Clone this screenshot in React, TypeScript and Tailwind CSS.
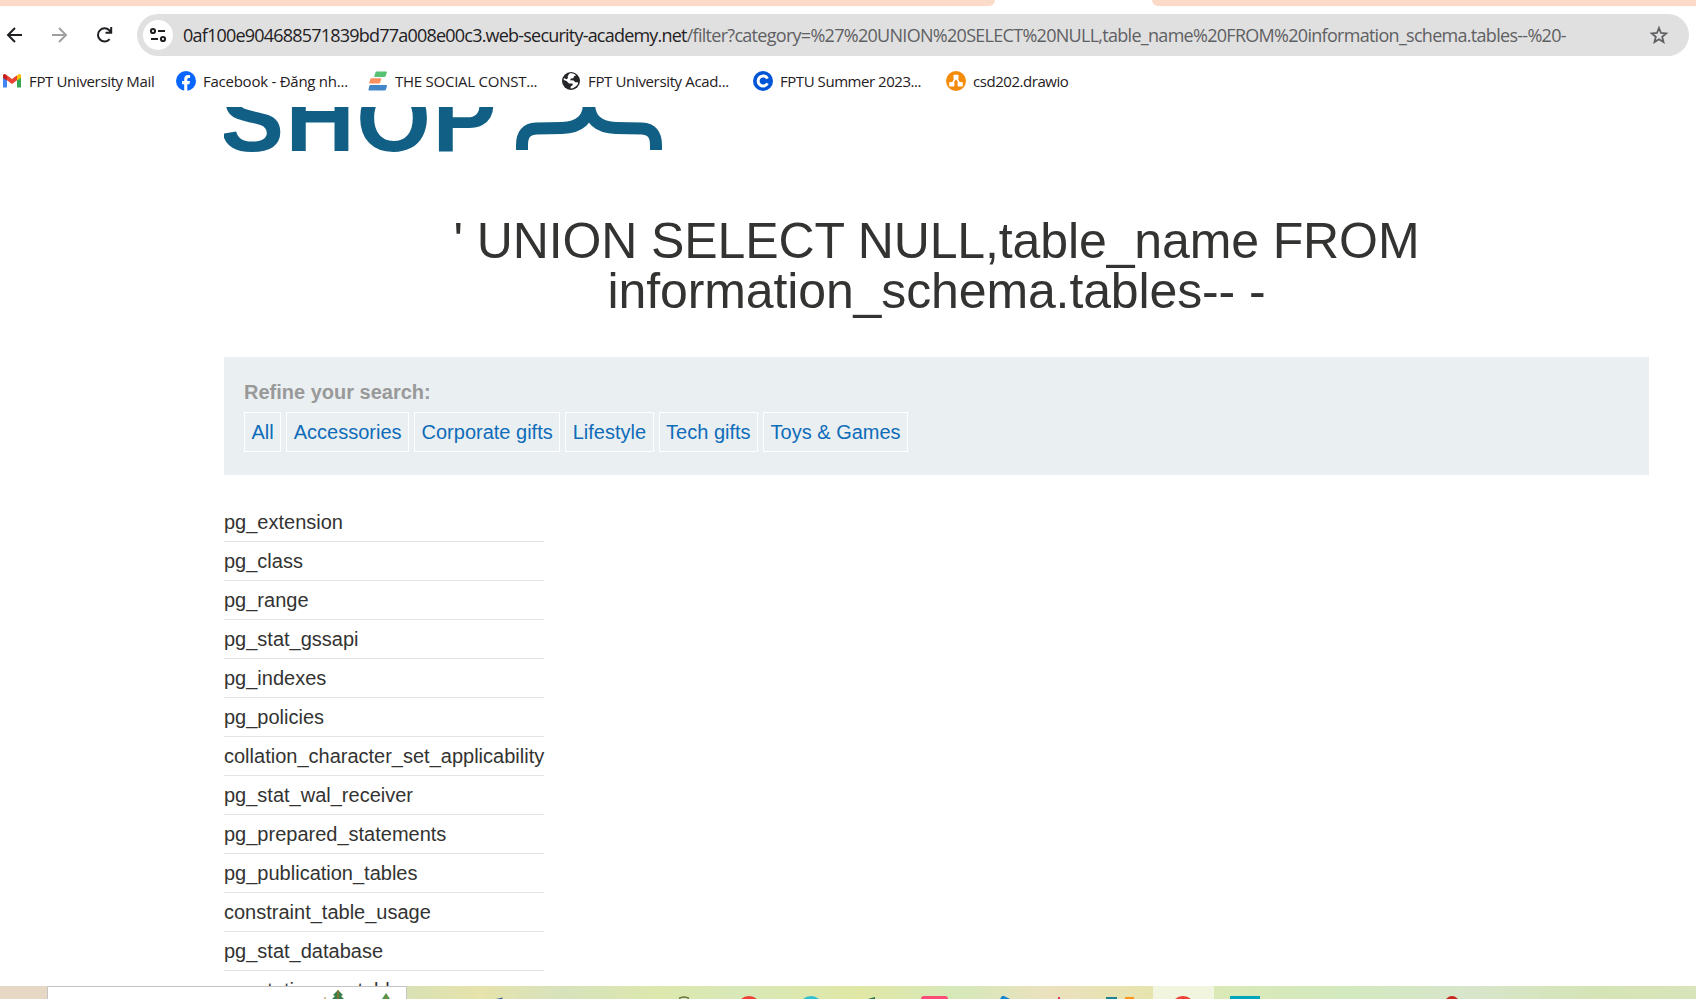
const URL_HOST = '0af100e904688571839bd77a008e00c3.web-security-academy.net';
const URL_PATH = '/filter?category=%27%20UNION%20SELECT%20NULL,table_name%20FROM%20information_schema.tables--%20-';

const categories = ['All', 'Accessories', 'Corporate gifts', 'Lifestyle', 'Tech gifts', 'Toys & Games'];
const rows = [
  'pg_extension', 'pg_class', 'pg_range', 'pg_stat_gssapi', 'pg_indexes', 'pg_policies',
  'collation_character_set_applicability', 'pg_stat_wal_receiver', 'pg_prepared_statements',
  'pg_publication_tables', 'constraint_table_usage', 'pg_stat_database', 'pg_statio_sys_tables',
];

function GmailIcon() {
  return (
    <svg width="20" height="20" viewBox="0 0 20 20">
      <path d="M1 5v11.5h4V8z" fill="#4285f4" />
      <path d="M15 8v8.500h4V5z" fill="#34a853" />
      <path d="M15 4.500v5L19 7V4.500C19 2.800 17 2.500 16 3.500z" fill="#fbbc04" />
      <path d="M5 4.500v5L1 7V4.500C1 2.800 3 2.500 4 3.500z" fill="#c5221f" />
      <path d="M5 4.300l5 3.700 5-3.700v5L10 13 5 9.300z" fill="#ea4335" />
    </svg>
  );
}
function FacebookIcon() {
  return (
    <svg width="20" height="20" viewBox="0 0 20 20">
      <circle cx="10" cy="10" r="10" fill="#0866ff" />
      <path d="M8.200 20v-6.800H6V10h2.200V8.600C8.200 5.300 9.700 4 12.200 4c.6 0 1.400.1 1.900.2v2.900h-1.200c-1.300 0-1.600.6-1.600 1.700V10H14l-.6 3.200h-2.100V20z" fill="#fff" />
    </svg>
  );
}
function StackIcon() {
  return (
    <svg width="20" height="20" viewBox="0 0 20 20">
      <path d="M8.500 .5h9.500q1.200 0 .8 1.200l-1 3q-.4 1.300-1.800 1.300H7q-1 0-.7-1l1-3Q7.500 .5 8.500 .5z" fill="#57c274" />
      <path d="M3.500 7.200h9q1 0 .7 1l-.9 3q-.3 1.200-1.600 1.200H2q-1 0-.7-1l.9-3q.3-1.200 1.300-1.200z" fill="#fb9160" />
      <path d="M2.500 14h15.800q1 0 .7 1l-.9 3q-.3 1.500-1.700 1.500H1.200q-1 0-.7-1l.7-3.200Q1.500 14 2.500 14z" fill="#4487c8" />
    </svg>
  );
}
function GlobeIcon() {
  return (
    <svg width="20" height="20" viewBox="0 0 20 20">
      <circle cx="10" cy="10" r="9" fill="#242528" />
      <path d="M8.500 2.500c3-.6 5 .4 6.500 2l-2 .8-.6 2-2.600.2-.6 1.800 3.500.3 1.500 1.700h2.600l.3 1.500-2 2.500-3.300 1.900-2.300.3.200-2 2-1.200-.2-1.700-3.500-.2-2.500-2.300L2.700 9l.2-2 2.700 1.200L7 7l-.4-1.800z" fill="#fff" />
    </svg>
  );
}
function CIcon() {
  return (
    <svg width="20" height="20" viewBox="0 0 20 20">
      <circle cx="10" cy="10" r="10" fill="#0056d6" />
      <path d="M14.500 7.600A5 5 0 1 0 14.500 12.400" fill="none" stroke="#fff" strokeWidth="3" />
    </svg>
  );
}
function DrawioIcon() {
  return (
    <svg width="20" height="20" viewBox="0 0 20 20">
      <circle cx="10" cy="10" r="10" fill="#f58b0b" />
      <path d="M10 6.500L6 13M10 6.500l4 6.500" stroke="#fff" strokeWidth="1.500" />
      <rect x="7.500" y="3.800" width="5" height="4.700" rx=".8" fill="#fff" />
      <rect x="3.200" y="11" width="5.200" height="4.500" rx=".8" fill="#fff" />
      <rect x="11.600" y="11" width="5.200" height="4.500" rx=".8" fill="#fff" />
    </svg>
  );
}

const bookmarks = [
  { icon: <GmailIcon />, label: 'FPT University Mail', box: 'w-[174px] tracking-[-0.35px]' },
  { icon: <FacebookIcon />, label: 'Facebook - Đăng nh...', box: 'w-[192px] tracking-[-0.25px]' },
  { icon: <StackIcon />, label: 'THE SOCIAL CONST...', box: 'w-[193px] tracking-[-0.25px]' },
  { icon: <GlobeIcon />, label: 'FPT University Acad...', box: 'w-[192px] tracking-[-0.35px]' },
  { icon: <CIcon />, label: 'FPTU Summer 2023...', box: 'w-[193px] tracking-[-0.45px]' },
  { icon: <DrawioIcon />, label: 'csd202.drawio', box: 'w-[160px] tracking-[-0.45px]' },
];

function Toolbar() {
  return (
    <div className="mt-2 flex h-[42px] shrink-0 items-center pr-[7px]">
      <svg className="shrink-0" width="137" height="42" viewBox="0 0 137 42" fill="none" strokeWidth="2">
        <path d="M22 21H8.500M15 14l-7 7 7 7" stroke="#1f2023" />
        <path d="M52 21h13.500M59 14l7 7-7 7" stroke="#a0a0a0" />
        <path d="M109.600 25.200A6.600 6.600 0 1 1 109.300 16.300L111 18.300M111.200 13v5.700h-5.700" stroke="#1f2023" />
      </svg>
      <div className="flex h-[42px] flex-1 items-center rounded-full bg-[#e0e0e0] pl-[6px] pr-5">
        <div className="flex size-[30px] items-center justify-center rounded-full bg-white">
          <svg width="18" height="18" viewBox="0 0 18 18" fill="none" stroke="#1f2023" strokeWidth="2">
            <circle cx="4" cy="5" r="2.100" /><path d="M9 5h7M2 13h7" /><circle cx="14" cy="13" r="2.100" />
          </svg>
        </div>
        <div className="ml-[10px] flex-1 whitespace-nowrap font-['Open_Sans'] text-[18px] leading-[42px] text-[#5f6063]">
          <span className="tracking-[-0.79px] text-[#1f2023]">{URL_HOST}</span>
          <span className="tracking-[-0.71px]">{URL_PATH}</span>
        </div>
        <svg width="20" height="20" viewBox="0 0 20 20" fill="none" stroke="#5f6063" strokeWidth="1.800">
          <path d="M10 3l2 5 5.200.4-4 3.400 1.300 5.200L10 14.200 5.500 17l1.300-5.200-4-3.400L8 8z" />
        </svg>
      </div>
    </div>
  );
}

function Logo() {
  return (
    <div className="relative h-[46px] overflow-hidden">
      <span className="absolute -left-1 -top-[37px] text-[96px] leading-[96px] font-bold tracking-[1.5px] text-[#115f84]">SHOP</span>
      <svg className="absolute left-[292px] top-0" width="146" height="43" viewBox="0 0 146 43">
        <path d="M6 43V38Q6 22 20 21.500L46 21Q73 20 73 -4Q73 20 100 21L126 21.500Q140 22 140 38V43" fill="none" stroke="#115f84" strokeWidth="12" />
      </svg>
    </div>
  );
}

function Taskbar() {
  return (
    <div className="flex h-[13px] shrink-0 bg-[linear-gradient(90deg,#e6d8c4_0px,#e6d8c4_48px,#dae1b4_410px,#e6e3ab_480px,#d7e2bc_560px,#dce8ad_660px,#d8e8b8_740px,#e1e8a6_860px,#d6e8ba_960px,#ebe1be_1050px,#e6e4ae_1150px,#dae9b7_1220px,#d3e9bf_1350px,#d8e5cb_1470px,#d5e4b5_1600px,#d8e4ba_1696px)]">
      <svg width="1696" height="13" viewBox="0 0 1696 13">
        <path d="M47.500 13V.5h359V13" fill="#fff" stroke="#c4c4c4" />
        <path d="M332 13l3-3-2-1 3-3 2-2 2 2 3 3-2 1 3 3z" fill="#367f4b" />
        <path d="M338 4v9" stroke="#ad6b23" strokeWidth="1.200" />
        <path d="M382 13l4-6 4 6z" fill="#4c994a" />
        <path d="M325 11v2M386 9v4" stroke="#a77b2b" />
        <path d="M496 13l7-1.500-1 1.500z" fill="#2b579a" />
        <path d="M679 12.500q5-3 10 0" stroke="#65703e" strokeWidth="1.500" fill="none" />
        <circle cx="749" cy="22" r="12" fill="#ee4035" />
        <circle cx="811" cy="22" r="12" fill="#32bfd5" />
        <path d="M868 13l7-2v2z" fill="#277348" />
        <rect x="921" y="10" width="27" height="12" rx="3" fill="#fb4c78" />
        <path d="M1000 13l2-3h2l6 3z" fill="#1684cd" />
        <rect x="1058" y="11" width="2" height="2" fill="#d73662" />
        <rect x="1106" y="11" width="11" height="2" fill="#218194" />
        <rect x="1125" y="11" width="9" height="2" fill="#fb9516" />
        <rect x="1153" y="0" width="61" height="13" fill="#f1f5e0" />
        <circle cx="1183" cy="22" r="12" fill="#ee4035" />
        <rect x="1230" y="10" width="30" height="3" fill="#00a5bc" />
        <circle cx="1452" cy="17" r="7" fill="#c6271d" />
      </svg>
    </div>
  );
}

export default function App() {
  return (
    <div className="flex h-[999px] w-[1696px] flex-col overflow-hidden bg-white">
      <div className="flex h-[6px] shrink-0 justify-between">
        <div className="w-[995px] rounded-br-[10px] bg-[#fcdac8]" />
        <div className="w-[544px] rounded-bl-[10px] bg-[#fcdac8]" />
      </div>
      <Toolbar />
      <div className="flex h-[51px] shrink-0 items-center pb-[1px] pl-[2px]">
        {bookmarks.map((b) => (
          <div key={b.label} className={'flex shrink-0 items-center gap-[7px] ' + b.box}>
            {b.icon}
            <span className="whitespace-nowrap font-['Open_Sans'] text-[15px] text-[#1f2023]">{b.label}</span>
          </div>
        ))}
      </div>
      <main className="h-[879px] overflow-hidden pl-[224px] pr-[47px] font-['Liberation_Sans'] text-[20px] text-[#333332]">
        <Logo />
        <h1 className="mt-[63px] text-center text-[50px] leading-[50px] tracking-[-0.12px]">
          ' UNION SELECT NULL,table_name FROM<br />information_schema.tables-- -
        </h1>
        <section className="mt-[41px] h-[118px] bg-[#eaeff2] pl-5 pt-[20px]">
          <p className="font-bold leading-[30px] text-[#999]">Refine your search:</p>
          <div className="mt-[5px] flex gap-[5px] text-[#0e6cb9]">
            {categories.map((c) => (
              <a key={c} className="h-10 whitespace-nowrap border border-white px-[6.5px] leading-[38px]">{c}</a>
            ))}
          </div>
        </section>
        <div className="mt-[28px] w-[320px]">
          {rows.map((r) => (
            <div key={r} className="h-[39px] whitespace-nowrap border-b border-[#e3e3e3] leading-[38px]">{r}</div>
          ))}
        </div>
      </main>
      <Taskbar />
    </div>
  );
}
